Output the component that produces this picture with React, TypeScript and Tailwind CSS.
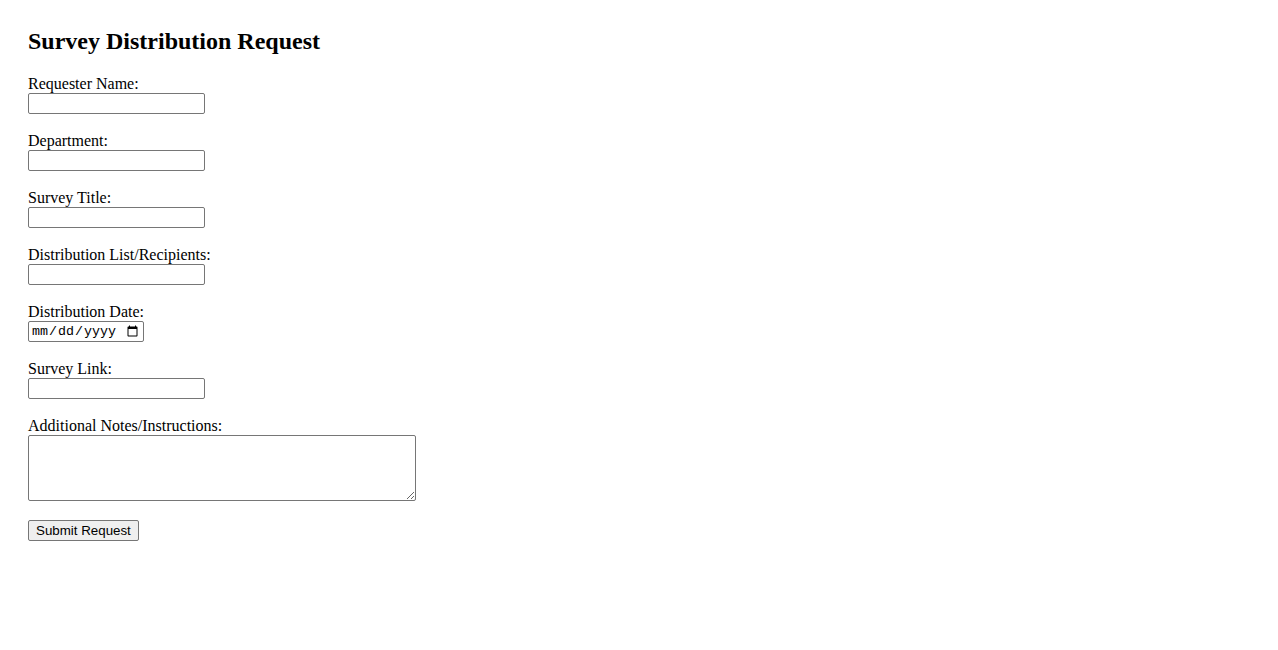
export default function App() {
  const fields = [
    { id: "name", label: "Requester Name:" },
    { id: "dept", label: "Department:" },
    { id: "title", label: "Survey Title:" },
    { id: "list", label: "Distribution List/Recipients:" },
  ]

  const inputCls =
    "block w-[177px] h-[21px] border border-[#767676] rounded-[2px] bg-white px-[2px] py-[1px] text-[13.33px] font-['Liberation_Sans',sans-serif] text-black"

  return (
    <div className="min-h-screen bg-white text-black font-['Liberation_Serif',serif]">
      <div className="px-[28px] pt-[27px] pb-[28px]">
        <h2 className="text-[24px] font-bold leading-[28px] mb-[20px]">Survey Distribution Request</h2>

        <form onSubmit={(e) => e.preventDefault()}>
          {fields.map((f) => (
            <div key={f.id} className="mb-[18px]">
              <label htmlFor={f.id} className="block text-[16px] leading-[18px]">
                {f.label}
              </label>
              <input id={f.id} type="text" className={inputCls} />
            </div>
          ))}

          {/* date */}
          <div className="mb-[18px]">
            <label htmlFor="date" className="block text-[16px] leading-[18px]">
              Distribution Date:
            </label>
            <input
              id="date"
              type="date"
              className="block w-[116px] h-[21px] border border-[#767676] rounded-[2px] bg-white px-[2px] text-[13.33px] font-['Liberation_Mono',monospace] text-black"
            />
          </div>

          <div className="mb-[18px]">
            <label htmlFor="link" className="block text-[16px] leading-[18px]">
              Survey Link:
            </label>
            <input id="link" type="url" className={inputCls} />
          </div>

          <div className="mb-[19px]">
            <label htmlFor="notes" className="block text-[16px] leading-[18px]">
              Additional Notes/Instructions:
            </label>
            <textarea
              id="notes"
              className="block w-[388px] h-[66px] border border-[#767676] rounded-[2px] bg-white p-[2px] text-[13.33px] font-['Liberation_Mono',monospace] text-black"
            />
          </div>

          <button
            type="submit"
            className="block h-[21px] px-[7px] whitespace-nowrap border border-[#767676] rounded-[2px] bg-[#efefef] text-[13.33px] leading-[17px] font-['Liberation_Sans',sans-serif] text-black"
          >
            Submit Request
          </button>
        </form>
      </div>
    </div>
  )
}
